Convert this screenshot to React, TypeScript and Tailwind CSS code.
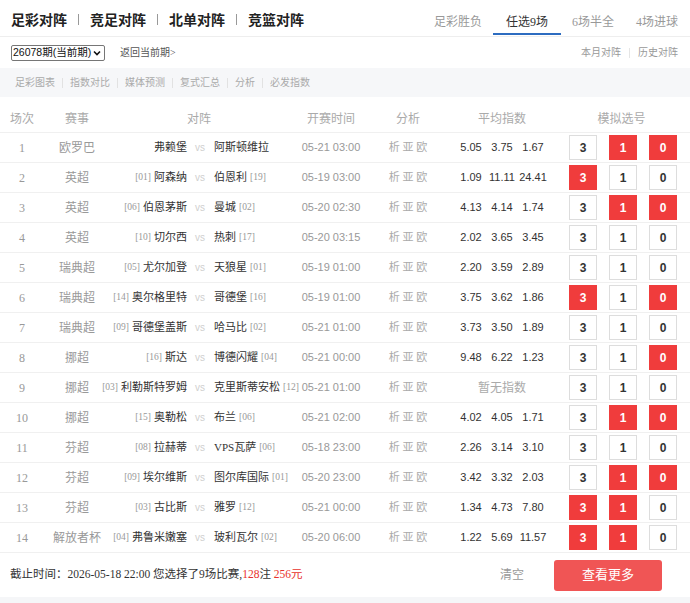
import React from "react";

type Row = {
  n: number;
  league: string;
  hr?: string;
  home: string;
  away: string;
  ar?: string;
  time: string;
  odds?: [string, string, string];
  picks: [boolean, boolean, boolean];
};

const rows: Row[] = [
  { n: 1, league: "欧罗巴", home: "弗赖堡", away: "阿斯顿维拉", time: "05-21 03:00", odds: ["5.05", "3.75", "1.67"], picks: [false, true, true] },
  { n: 2, league: "英超", hr: "01", home: "阿森纳", away: "伯恩利", ar: "19", time: "05-19 03:00", odds: ["1.09", "11.11", "24.41"], picks: [true, false, false] },
  { n: 3, league: "英超", hr: "06", home: "伯恩茅斯", away: "曼城", ar: "02", time: "05-20 02:30", odds: ["4.13", "4.14", "1.74"], picks: [false, true, true] },
  { n: 4, league: "英超", hr: "10", home: "切尔西", away: "热刺", ar: "17", time: "05-20 03:15", odds: ["2.02", "3.65", "3.45"], picks: [false, false, false] },
  { n: 5, league: "瑞典超", hr: "05", home: "尤尔加登", away: "天狼星", ar: "01", time: "05-19 01:00", odds: ["2.20", "3.59", "2.89"], picks: [false, false, false] },
  { n: 6, league: "瑞典超", hr: "14", home: "奥尔格里特", away: "哥德堡", ar: "16", time: "05-19 01:00", odds: ["3.75", "3.62", "1.86"], picks: [true, false, true] },
  { n: 7, league: "瑞典超", hr: "09", home: "哥德堡盖斯", away: "哈马比", ar: "02", time: "05-21 01:00", odds: ["3.73", "3.50", "1.89"], picks: [false, false, false] },
  { n: 8, league: "挪超", hr: "16", home: "斯达", away: "博德闪耀", ar: "04", time: "05-21 00:00", odds: ["9.48", "6.22", "1.23"], picks: [false, false, true] },
  { n: 9, league: "挪超", hr: "03", home: "利勒斯特罗姆", away: "克里斯蒂安松", ar: "12", time: "05-21 01:00", picks: [false, false, false] },
  { n: 10, league: "挪超", hr: "15", home: "奥勒松", away: "布兰", ar: "06", time: "05-21 02:00", odds: ["4.02", "4.05", "1.71"], picks: [false, true, true] },
  { n: 11, league: "芬超", hr: "08", home: "拉赫蒂", away: "VPS瓦萨", ar: "06", time: "05-18 23:00", odds: ["2.26", "3.14", "3.10"], picks: [false, false, false] },
  { n: 12, league: "芬超", hr: "09", home: "埃尔维斯", away: "图尔库国际", ar: "01", time: "05-20 23:00", odds: ["3.42", "3.32", "2.03"], picks: [false, true, true] },
  { n: 13, league: "芬超", hr: "03", home: "古比斯", away: "雅罗", ar: "12", time: "05-21 00:00", odds: ["1.34", "4.73", "7.80"], picks: [true, true, false] },
  { n: 14, league: "解放者杯", hr: "04", home: "弗鲁米嫩塞", away: "玻利瓦尔", ar: "02", time: "05-20 06:00", odds: ["1.22", "5.69", "11.57"], picks: [true, true, false] },
];

const serif = "font-['Liberation_Serif','Noto_Sans_CJK_SC',serif]";
const sans = "font-['Liberation_Sans','Noto_Sans_CJK_SC',sans-serif]";

function Box({ label, on }: { label: string; on: boolean }) {
  return (
    <div
      className={
        on
          ? `w-[28px] h-[25px] flex items-center justify-center text-[12px] font-bold bg-[#f03c3c] text-white ${sans}`
          : `w-[28px] h-[25px] flex items-center justify-center text-[12px] font-bold bg-white border border-[#dddddd] text-[#333] ${sans}`
      }
    >
      {label}
    </div>
  );
}

export default function App() {
  return (
    <div className={`w-[690px] h-[603px] bg-white overflow-hidden ${serif}`}>
      {/* top header */}
      <div className="h-[37px] border-b border-[#eeeeee] flex items-start justify-between">
        <div className="flex items-center gap-[11px] pl-[11px] pt-[9px] font-['Noto_Sans_CJK_SC',sans-serif] font-bold text-[14px] leading-[20px] text-[#222]">
          <span>足彩对阵</span>
          <span className="w-px h-[11px] bg-[#999]" />
          <span>竞足对阵</span>
          <span className="w-px h-[11px] bg-[#999]" />
          <span>北单对阵</span>
          <span className="w-px h-[11px] bg-[#999]" />
          <span>竞篮对阵</span>
        </div>
        <div className="flex items-start text-[12px]">
          <div className="h-[35px] pt-[12px] leading-[21px] px-[11px] text-[#999]">足彩胜负</div>
          <div className="h-[35px] pt-[12px] leading-[21px] px-[13px] text-[#333] border-b-2 border-[#2d6cc0]">任选9场</div>
          <div className="h-[35px] pt-[12px] leading-[21px] px-[11px] text-[#999]">6场半全</div>
          <div className="h-[35px] pt-[12px] leading-[21px] pl-[11px] pr-[12px] text-[#999]">4场进球</div>
        </div>
      </div>

      {/* period row */}
      <div className="h-[31px] flex items-center">
        <div className={`ml-[11px] w-[94px] h-[16px] border border-[#767676] rounded-[2px] flex items-center justify-between pl-[1px] pr-[3px] text-[10.5px] leading-none text-[#111] whitespace-nowrap overflow-hidden ${sans}`}>
          <span className="whitespace-nowrap">26078期(当前期)</span>
          <svg width="8" height="6" viewBox="0 0 8 6" className="shrink-0">
            <path d="M1 1.5 L4 4.5 L7 1.5" stroke="#111" strokeWidth="1.6" fill="none" />
          </svg>
        </div>
        <span className="ml-[15px] text-[10px] text-[#555]">返回当前期&gt;</span>
        <div className="ml-auto pr-[12px] flex items-center gap-[8px] text-[10px] text-[#999]">
          <span>本月对阵</span>
          <span className="w-px h-[10px] bg-[#e5e5e5]" />
          <span>历史对阵</span>
        </div>
      </div>

      {/* sub nav */}
      <div className="h-[29px] bg-[#f6f7f9] flex items-center pl-[15px] gap-[7px] text-[10px] text-[#aaa]">
        <span>足彩图表</span>
        <span className="w-px h-[10px] bg-[#e2e2e2]" />
        <span>指数对比</span>
        <span className="w-px h-[10px] bg-[#e2e2e2]" />
        <span>媒体预测</span>
        <span className="w-px h-[10px] bg-[#e2e2e2]" />
        <span>复式汇总</span>
        <span className="w-px h-[10px] bg-[#e2e2e2]" />
        <span>分析</span>
        <span className="w-px h-[10px] bg-[#e2e2e2]" />
        <span>必发指数</span>
      </div>

      {/* table header */}
      <div className="h-[36px] pt-[8px] border-b border-[#f0f0f0] flex items-center text-[12px] text-[#aaa]">
        <div className="w-[44px] text-center">场次</div>
        <div className="w-[66px] text-center">赛事</div>
        <div className="w-[187px] text-center pr-[9px]">对阵</div>
        <div className="w-[68px] text-center">开赛时间</div>
        <div className="w-[86px] text-center">分析</div>
        <div className="w-[102px] text-center">平均指数</div>
        <div className="flex-1 text-center">模拟选号</div>
      </div>

      {/* rows */}
      {rows.map((r) => (
        <div key={r.n} className="h-[30px] border-b border-[#f0f0f0] flex items-center">
          <div className="w-[44px] text-center text-[12px] text-[#999]">{r.n}</div>
          <div className="w-[66px] text-center text-[12px] text-[#999] whitespace-nowrap">{r.league}</div>
          <div className="w-[103px] flex justify-end items-center whitespace-nowrap">
            {r.hr && <span className="text-[9.5px] text-[#999] mr-[3px]">[{r.hr}]</span>}
            <span className="text-[11px] text-[#333]">{r.home}</span>
            <span className={`w-[26px] shrink-0 text-center text-[10px] text-[#cfcfcf] ${sans}`}>vs</span>
          </div>
          <div className="w-[84px] pl-[1px] whitespace-nowrap flex items-center">
            <span className="text-[11px] text-[#333]">{r.away}</span>
            {r.ar && <span className="text-[9.5px] text-[#999] ml-[3px]">[{r.ar}]</span>}
          </div>
          <div className={`w-[68px] text-center text-[11px] text-[#999] whitespace-nowrap ${sans}`}>{r.time}</div>
          <div className="w-[86px] text-center text-[11px] text-[#aaa] whitespace-pre">析 亚 欧</div>
          <div className="w-[102px] flex justify-center">
            {r.odds ? (
              r.odds.map((o, i) => (
                <div key={i} className={`w-[31px] text-center text-[11px] text-[#333] ${sans}`}>
                  {o}
                </div>
              ))
            ) : (
              <div className="text-[12px] text-[#aaa]">暂无指数</div>
            )}
          </div>
          <div className="flex gap-[12px] pl-[16px]">
            <Box label="3" on={r.picks[0]} />
            <Box label="1" on={r.picks[1]} />
            <Box label="0" on={r.picks[2]} />
          </div>
        </div>
      ))}

      {/* footer */}
      <div className="h-[44px] flex items-center pl-[10px] pr-[28px]">
        <div className="text-[11.5px] text-[#333] whitespace-nowrap">
          截止时间：2026-05-18 22:00 您选择了9场比赛,<span className="text-[#e8322d]">128</span>注 <span className="text-[#e8322d]">256元</span>
        </div>
        <div className="ml-auto mr-[30px] text-[12px] text-[#999]">清空</div>
        <div className="w-[108px] h-[31px] rounded-[3px] bg-[#f05555] text-white text-[13px] flex items-center justify-center">查看更多</div>
      </div>
      <div className="h-[6px] bg-[#f5f6f8]" />
    </div>
  );
}
